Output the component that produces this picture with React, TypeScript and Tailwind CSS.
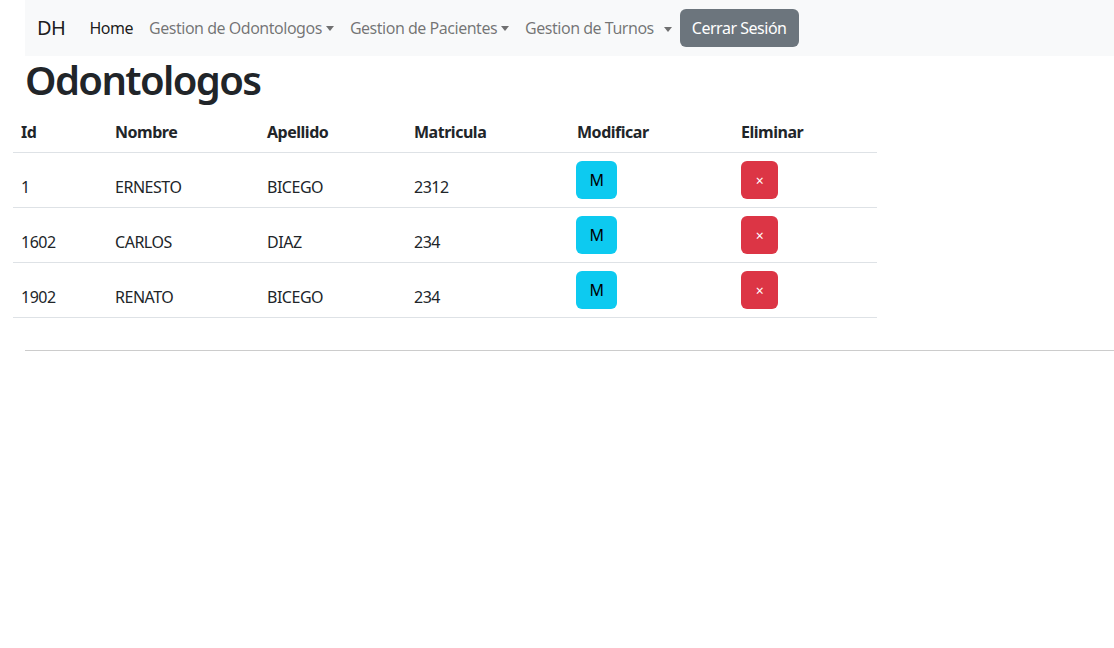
import React from 'react';

const ODONTOLOGOS = [
  { id: 1, nombre: 'ERNESTO', apellido: 'BICEGO', matricula: '2312' },
  { id: 1602, nombre: 'CARLOS', apellido: 'DIAZ', matricula: '234' },
  { id: 1902, nombre: 'RENATO', apellido: 'BICEGO', matricula: '234' },
];

const COLS = ['w-[94px]', 'w-[152px]', 'w-[147px]', 'w-[163px]', 'w-[164px]', 'w-[144px]'];

const Caret = () => (
  <span className="ml-[4px] inline-block w-0 h-0 border-x-[4px] border-x-transparent border-t-[5px] border-t-current align-middle" />
);

export default function App() {
  return (
    <div className="min-h-[648px] bg-white text-[#212529] font-['Noto_Sans',sans-serif] text-[16px] tracking-[-0.03em]">
      {/* Navbar */}
      <nav className="ml-[25px] h-[56px] bg-[#f8f9fa] flex items-center pl-[12px]">
        <span className="text-[20px] text-black/90 mr-[16px]">DH</span>
        <a className="px-[8px] text-black/90">Home</a>
        <a className="px-[8px] text-black/55 flex items-center">
          Gestion de Odontologos
          <Caret />
        </a>
        <a className="px-[8px] text-black/55 flex items-center">
          Gestion de Pacientes
          <Caret />
        </a>
        <a className="px-[8px] text-black/55 flex items-center">
          Gestion de Turnos
          <span className="ml-[6px]"><Caret /></span>
        </a>
        <button className="h-[38px] px-[12px] rounded-[6px] bg-[#6c757d] text-white">
          Cerrar Sesión
        </button>
      </nav>

      <h1 className="ml-[25px] text-[40px] font-semibold leading-[48px] mb-[8px] tracking-[-0.04em]">Odontologos</h1>

      {/* Tabla */}
      <div className="ml-[13px] w-[864px]">
        <div className="flex border-b border-[#dee2e6] h-[41px] items-center font-bold">
          {['Id', 'Nombre', 'Apellido', 'Matricula', 'Modificar', 'Eliminar'].map((h, i) => (
            <div key={h} className={`${COLS[i]} px-[8px]`}>{h}</div>
          ))}
        </div>
        {ODONTOLOGOS.map((o) => (
          <div key={o.id} className="flex border-b border-[#dee2e6] h-[55px] items-end pb-[8px]">
            <div className={`${COLS[0]} px-[8px] leading-[24px]`}>{o.id}</div>
            <div className={`${COLS[1]} px-[8px] leading-[24px]`}>{o.nombre}</div>
            <div className={`${COLS[2]} px-[8px] leading-[24px]`}>{o.apellido}</div>
            <div className={`${COLS[3]} px-[8px] leading-[24px]`}>{o.matricula}</div>
            <div className={`${COLS[4]} px-[7px]`}>
              <button className="h-[38px] w-[41px] rounded-[6px] bg-[#0dcaf0] text-black">M</button>
            </div>
            <div className={`${COLS[5]} px-[8px]`}>
              <button className="h-[38px] w-[37px] rounded-[6px] bg-[#dc3545] text-white text-[14px]">×</button>
            </div>
          </div>
        ))}
      </div>

      <hr className="ml-[25px] mt-[32px] border-0 border-t border-[#cccccc]" />
    </div>
  );
}
